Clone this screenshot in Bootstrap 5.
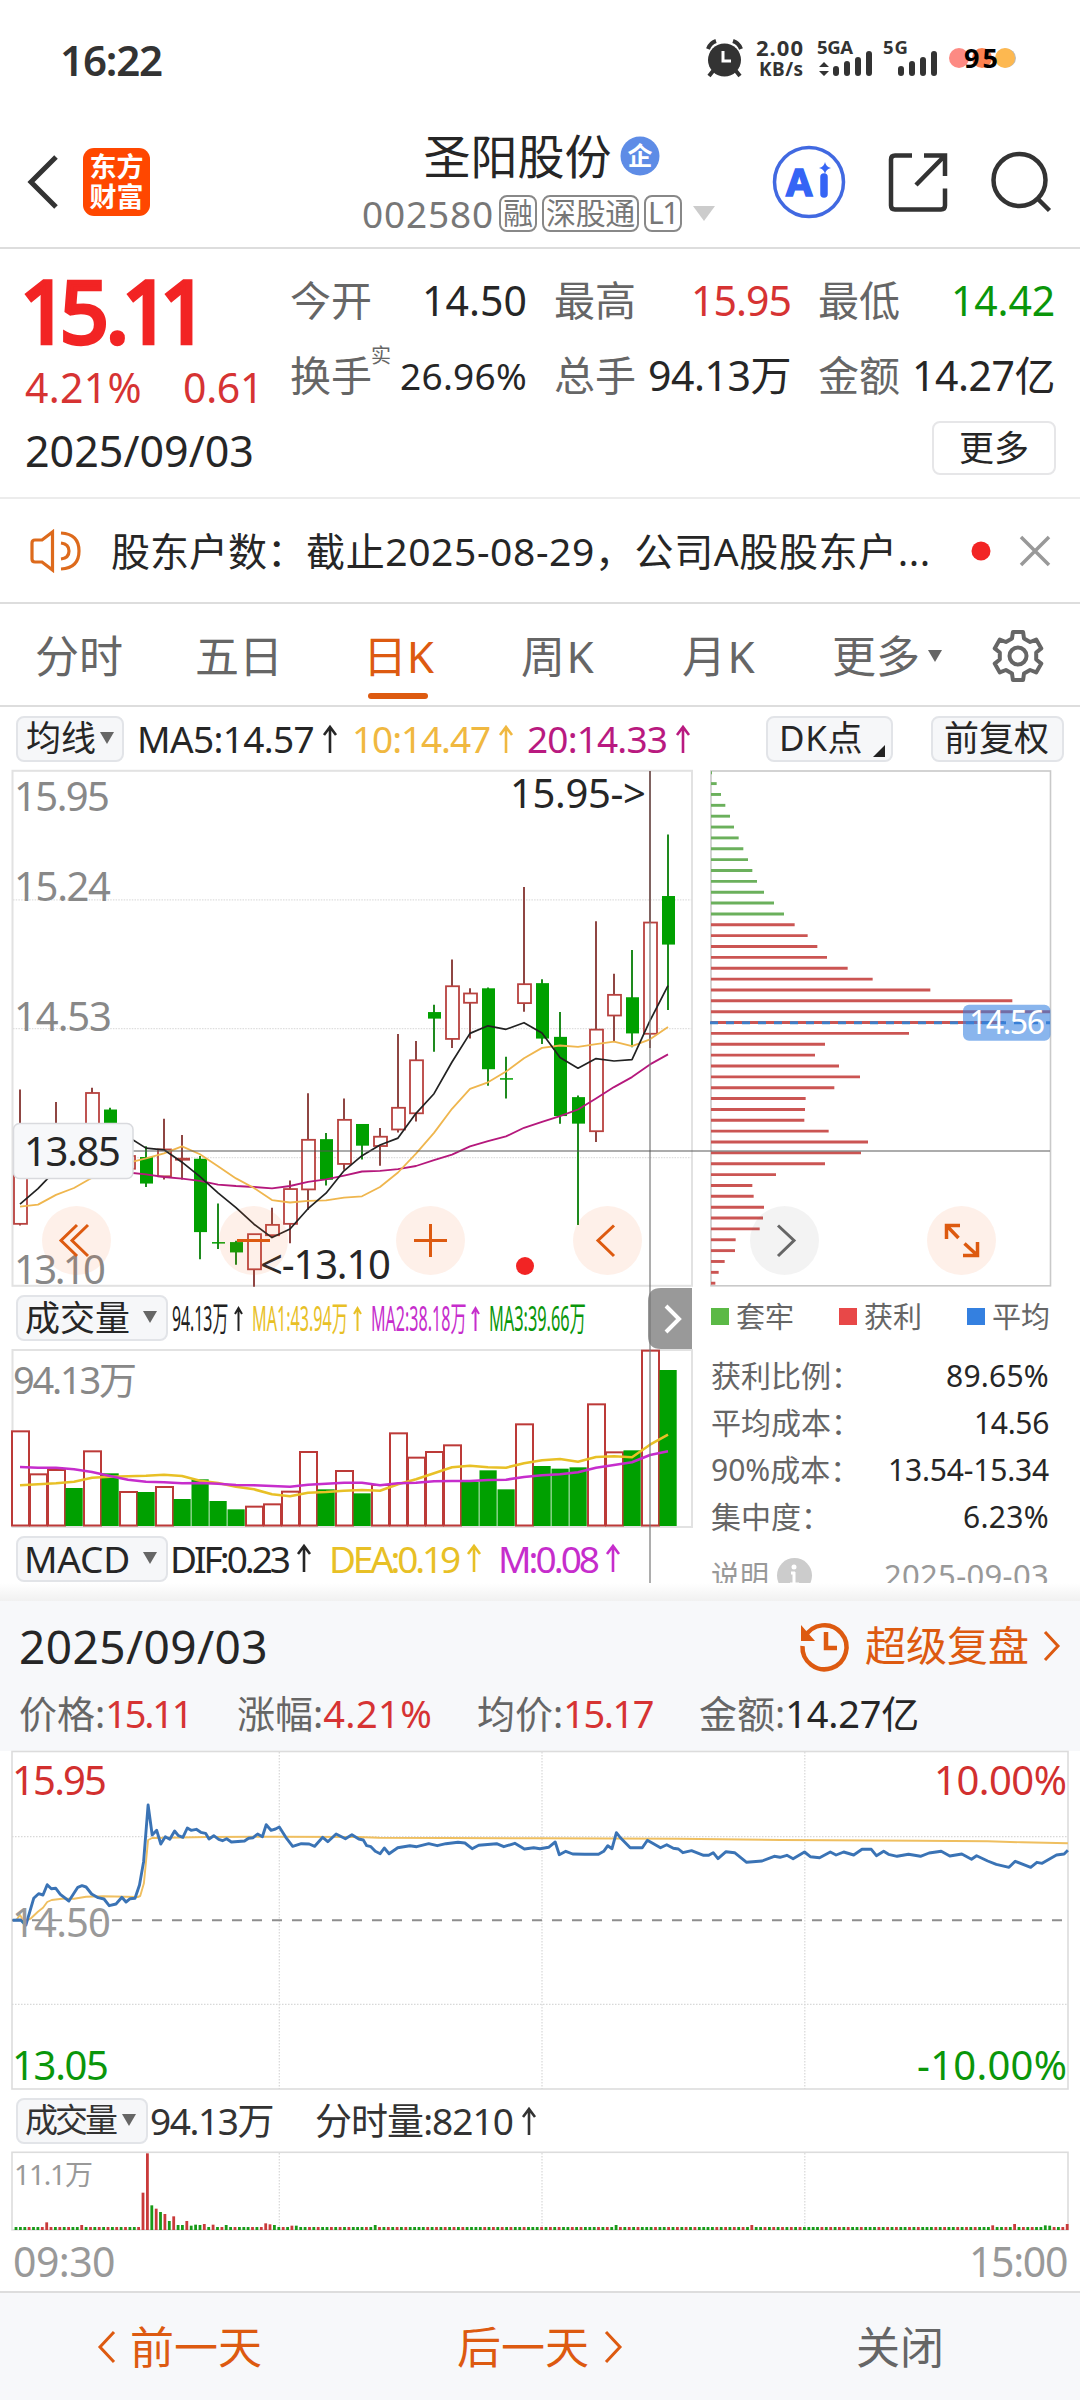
<!DOCTYPE html>
<html lang="zh-CN">
<head>
<meta charset="utf-8">
<meta name="viewport" content="width=device-width, initial-scale=1">
<title>圣阳股份 002580</title>
<link href="https://cdn.jsdelivr.net/npm/bootstrap@5.3.0/dist/css/bootstrap.min.css" rel="stylesheet">
<style>
:root{--ink:#262626;--dim:#666;--up:#f22424;--up2:#d63333;--down:#0a960a;--brand:#dd5a10;--panel:#f7f8fa}
body{width:1080px;height:2400px;overflow:hidden;background:#fff;color:var(--ink);font-family:"Noto Sans","Noto Sans CJK SC",sans-serif;line-height:1;white-space:nowrap}
svg{display:block;overflow:visible;flex:none}
svg text{font-family:"Noto Sans","Noto Sans CJK SC",sans-serif}
[data-fit]{display:inline-block;white-space:pre}
.c-dim{color:var(--dim)}.c-up{color:var(--up2)}.c-down{color:var(--down)}.c-brand{color:var(--brand)}
.c-yel{color:#f0b840}.c-yel2{color:#e8c026}.c-pur{color:#b91a80}.c-mag{color:#c62dcc}.c-gray{color:#999}
.status{height:120px;padding-left:60px;padding-bottom:1px}
.clock{font-size:42px;font-weight:600;color:#333}
.head{height:129px;border-bottom:2px solid #ddd;padding-left:28px;padding-bottom:3px}
.logo{width:67px;height:68px;border-radius:11px;background:#ff4700;color:#fff;font-weight:700;font-size:27px;line-height:30px;margin-left:25px}
.titles{width:362px;margin-left:212px}
.title{font-size:47px;height:48px;padding-right:3px}
.sub{font-size:37px;height:38px;color:#777;gap:5px;margin-top:14px}
.tag{border:2px solid #888;border-radius:8px;height:37px;font-size:30px;padding:0 2px}
.quote{height:250px;border-bottom:2px solid #ececec}
.qleft{width:290px;padding-left:25px}
.price{height:104px}
.qgrid{display:grid;grid-template-columns:repeat(3,237px);column-gap:27px;grid-template-rows:75px 75px;padding-top:14px}
.qgrid>div{display:flex;align-items:center;justify-content:space-between;font-size:41px}
.qgrid sup{font-size:20px;top:-20px;margin-left:-1px;margin-right:auto;position:relative}
.more{width:124px;height:54px;border:2px solid #e6e6e8;border-radius:8px;font-size:35px;margin:8px 0 0 642px;padding-bottom:2px}
.notice{height:105px;border-bottom:2px solid #ddd;padding-left:29px;font-size:39px}
.tabs{height:103px;border-bottom:2px solid #ddd;padding-left:35px;font-size:44px;color:var(--dim)}
.tabs>div{height:100%;display:flex;align-items:center;position:relative;padding-top:2px}
.tabs .on{color:var(--brand)}
.tabs .on::after{content:"";position:absolute;left:5px;bottom:6px;width:60px;height:6px;border-radius:3px;background:var(--brand)}
.tri{width:0;height:0;border:7px solid transparent;border-top:12px solid #666;border-bottom:0}
.pill{background:#f6f7f9;border:2px solid #e2e4e8;border-radius:8px;height:46px;font-size:35px;display:flex;align-items:center;padding-bottom:2px}
.main{height:876px;position:relative;overflow:hidden}
.ind{height:63px;padding-left:16px;font-size:37px}
.fig{display:flex;align-items:center}
.arw{margin-left:9px;stroke:currentColor;fill:none;stroke-width:2.6}
.volrow{height:64px;padding-left:16px}
.macdrow{height:81px;padding:9px 0 0 16px;font-size:37px}
.tools{position:absolute;left:42px;top:499px;width:954px}
.tool{width:69px;height:69px;border-radius:50%;background:rgba(250,110,40,.1)}
.tool.mute{background:rgba(100,100,100,.08)}
.chips{width:380px;padding-left:11px}
.legend{height:61px;width:339px;font-size:29px;color:var(--dim)}
.sq{width:18px;height:17px;margin-right:7px}
.stat{height:47px;width:338px;font-size:30px}
.over{position:absolute;left:0;top:0;pointer-events:none}
.panel{height:168px;background:linear-gradient(#fff,#f1f1f1 18px,var(--panel) 18px)}
.pl{padding:0 19px;font-size:46px;height:125px;margin-bottom:-18px}
.pv{height:61px;font-size:38px;padding:4px 0 0 19px}
.vrow{height:61px;padding-left:16px;font-size:37px;color:#333}
.times{height:61px;padding:2px 13px 0;font-size:41px;color:#999}
.foot{height:109px;border-top:2px solid #ddd;background:var(--panel);font-size:44px;padding-left:97px}
</style>
</head>
<body>
<div class="status d-flex align-items-center">
  <span class="clock" data-fit="102">16:22</span>
  <svg width="330" height="60" viewBox="700 32 330 60" style="margin-left:538px">
    <g fill="#333" stroke="#333">
      <circle cx="724.500" cy="62" r="16.500" stroke="none"/>
      <path d="M708 51q2-6 8-8M741 51q-2-6-8-8M713 73l-4 5M736 73l4 5" fill="none" stroke-width="4"/>
      <path d="M723 53v10h8" fill="none" stroke="#fff" stroke-width="3"/>
    </g>
    <g fill="#333" font-weight="700">
      <text x="756" y="58" font-size="22" textLength="47">2.00</text>
      <text x="759" y="78" font-size="19" textLength="44">KB/s</text>
      <text x="817" y="56" font-size="18.500" textLength="36">5GA</text>
      <text x="883" y="56" font-size="18.500" textLength="25">5G</text>
    </g>
    <g stroke="#333" stroke-width="6" stroke-linecap="round">
      <path d="M836 71v4M847 66v9M858 62v13M869 56v19M901 71v4M912 66v9M923 62v13M934 56v19"/>
    </g>
    <path d="M819 69l5-5 5 5zM819 73l5 5 5-5z" fill="#333"/>
    <ellipse cx="1006" cy="60" rx="10" ry="9.500" fill="#bbb"/>
    <circle cx="959" cy="60" r="10" fill="#fd8a83"/><circle cx="982" cy="60" r="10" fill="#fd8150"/><circle cx="1005" cy="60" r="10" fill="#fdb850"/>
    <text x="964" y="70" font-size="27" font-weight="700" fill="#000" textLength="34">95</text>
  </svg>
</div>

<div class="head d-flex align-items-center">
  <svg width="30" height="54" viewBox="0 0 30 54"><path d="M28 2L3 27l25 25" fill="none" stroke="#333" stroke-width="5"/></svg>
  <div class="logo d-flex flex-column align-items-center justify-content-center"><div>东方</div><div>财富</div></div>
  <div class="titles d-flex flex-column">
    <div class="title d-flex align-items-center justify-content-center"><span>圣阳股份</span>
      <svg class="ms-2" width="40" height="40" viewBox="0 0 40 40"><circle cx="20" cy="20" r="19.500" fill="#5e8ce6"/><text x="20" y="29" font-size="25" font-weight="700" fill="#fff" text-anchor="middle">企</text></svg>
    </div>
    <div class="sub d-flex align-items-center"><span data-fit="132">002580</span><span class="tag d-flex align-items-center">融</span><span class="tag d-flex align-items-center"><span data-fit="89">深股通</span></span><span class="tag d-flex align-items-center"><span data-fit="30">L1</span></span>
      <svg style="margin-left:6px" width="22" height="15"><path d="M0 0h22L11 15z" fill="#ccc"/></svg></div>
  </div>
  <svg width="300" height="74" viewBox="772 144 300 74" style="margin-left:49px">
    <circle cx="808" cy="181" r="34.500" fill="none" stroke="#4169e1" stroke-width="3.500"/>
    <text x="785" y="195" font-size="38" font-weight="700" stroke="#3564f5" stroke-width="1.500" fill="#3564f5" textLength="28">A</text>
    <path d="M823 176v17" stroke="#3564f5" stroke-width="7.500" stroke-linecap="round"/>
    <path d="M824 161q1 5 6 6-5 1-6 6-1-5-6-6 5-1 6-6z" fill="#3564f5"/>
    <g fill="none" stroke="#333" stroke-width="4.500"><path d="M911 154.500h-17q-4 0-4 4v46q0 4 4 4h46q4 0 4-4v-17M923 154.500h21V175M944 154.500L915 184"/>
    <circle cx="1018.500" cy="179" r="26"/><path d="M1036 197l12.500 12.500"/></g>
  </svg>
</div>

<div class="quote d-flex">
  <div class="qleft">
    <svg class="price" width="200" height="104" viewBox="25 249 200 104"><text y="343" x="20 60 106 122 160" font-size="85" fill="#f22424" stroke="#f22424" stroke-width="4.500">15.11</text></svg>
    <div class="c-up d-flex align-items-center" style="height:69px;font-size:41px"><span data-fit="117">4.21%</span><span data-fit="80" style="margin-left:41px">0.61</span></div>
    <div class="d-flex align-items-center" style="height:56px;font-size:43px"><span data-fit="229">2025/09/03</span></div>
  </div>
  <div>
    <div class="qgrid">
      <div><span class="c-dim">今开</span><span data-fit="105">14.50</span></div>
      <div><span class="c-dim">最高</span><span class="c-up" data-fit="100">15.95</span></div>
      <div><span class="c-dim">最低</span><span class="c-down" data-fit="104">14.42</span></div>
      <div><span class="c-dim">换手</span><sup class="c-dim">实</sup><span style="font-size:37px" data-fit="127">26.96%</span></div>
      <div><span class="c-dim">总手</span><span data-fit="143">94.13万</span></div>
      <div><span class="c-dim">金额</span><span data-fit="143">14.27亿</span></div>
    </div>
    <div class="more d-flex align-items-center justify-content-center">更多</div>
  </div>
</div>

<div class="notice d-flex align-items-center">
  <svg width="52" height="44" viewBox="28 528 52 44"><g fill="none" stroke="#dd6a1c" stroke-width="3.200"><path d="M51.500 531L41 539h-7q-3 0-3 3v16q0 3 3 3h7l10.500 8z"/><path d="M60 532q18 1 18 18t-18 18M60 542q8 1 8 8t-8 8"/></g></svg>
  <span class="ms-1" style="padding-left:26px"><span data-fit="195">股东户数：</span><span data-fit="625">截止2025-08-29，公司A股股东户...</span></span>
  <svg style="margin-left:39px" width="82" height="32" viewBox="970 534 82 32"><circle cx="981" cy="550" r="9.500" fill="#f22424"/><path d="M1021 536l28 28M1049 536l-28 28" stroke="#999" stroke-width="3.500"/></svg>
</div>

<div class="tabs d-flex">
  <div style="width:160px">分时</div><div style="width:168px">五日</div><div class="on" style="width:158px"><span data-fit="71">日K</span></div><div style="width:161px"><span data-fit="74">周K</span></div><div style="width:150px"><span data-fit="74">月K</span></div>
  <div style="width:160px">更多<i class="tri ms-2"></i></div>
  <div><svg width="52" height="52" viewBox="-26 -26 52 52"><path id="gear" fill="none" stroke="#666" stroke-width="4" stroke-linejoin="round"/><circle r="8.500" fill="none" stroke="#666" stroke-width="4"/></svg></div>
</div>

<div class="main">
  <div class="ind d-flex align-items-center">
    <div class="pill" style="width:108px;padding-left:8px"><span data-fit="70">均线</span><i class="tri ms-1"></i></div>
    <span class="fig" style="margin-left:13px;width:215px"><span data-fit="177">MA5:14.57</span><svg class="arw" width="14" height="28"><path d="M7 28V2M1 10l6-8 6 8"/></svg></span>
    <span class="fig c-yel" style="width:175px"><span data-fit="138">10:14.47</span><svg class="arw" width="14" height="28"><path d="M7 28V2M1 10l6-8 6 8"/></svg></span>
    <span class="fig c-pur" style="width:239px"><span data-fit="140">20:14.33</span><svg class="arw" width="14" height="28"><path d="M7 28V2M1 10l6-8 6 8"/></svg></span>
    <div class="pill position-relative" style="width:127px;padding-left:11px"><span data-fit="84">DK点</span><svg class="position-absolute" style="right:6px;bottom:3px" width="12" height="12"><path d="M12 0v12H0z" fill="#222"/></svg></div>
    <div class="pill" style="width:133px;margin-left:38px;padding-left:11px">前复权</div>
  </div>
  <div class="d-flex">
    <div style="width:700px">
      <svg id="kline" width="700" height="516" viewBox="0 770 700 516"></svg>
      <div class="volrow d-flex align-items-center">
        <div class="pill" style="width:152px;padding-left:7px">成交量<i class="tri" style="margin-left:13px"></i></div>
        <svg width="440" height="46" viewBox="168 1295 440 46" font-size="34">
          <text transform="translate(172 1331) scale(.465 1)" fill="#222">94.13万</text>
          <text transform="translate(252 1331) scale(.475 1)" fill="#e8c026">MA1:43.94万</text>
          <text transform="translate(371 1331) scale(.473 1)" fill="#c62dcc">MA2:38.18万</text>
          <text transform="translate(489 1331) scale(.48 1)" fill="#0a960a">MA3:39.66万</text>
          <g fill="none" stroke-width="2"><path stroke="#222" d="M238.500 1331v-23m-3.500 6l3.500-6 3.500 6"/><path stroke="#e8c026" d="M357.500 1331v-23m-3.500 6l3.500-6 3.500 6"/><path stroke="#c62dcc" d="M475.500 1331v-23m-3.500 6l3.500-6 3.500 6"/></g>
        </svg>
      </div>
      <svg id="vol" width="700" height="177" viewBox="0 1350 700 177"></svg>
      <div class="macdrow d-flex">
        <div class="pill" style="width:152px;padding-left:6px;font-size:37px"><span data-fit="106">MACD</span><i class="tri" style="margin-left:13px"></i></div>
        <div class="d-flex align-items-center" style="height:44px"><span class="fig" style="width:161px;padding-left:2px"><span data-fit="118">DIF:0.23</span><svg class="arw" width="14" height="28"><path d="M7 28V2M1 10l6-8 6 8"/></svg></span><span class="fig c-yel2" style="width:169px"><span data-fit="129">DEA:0.19</span><svg class="arw" width="14" height="28"><path d="M7 28V2M1 10l6-8 6 8"/></svg></span><span class="fig c-mag"><span data-fit="99">M:0.08</span><svg class="arw" width="14" height="28"><path d="M7 28V2M1 10l6-8 6 8"/></svg></span></div>
      </div>
    </div>
    <div class="chips">
      <svg id="chip" width="341" height="516" viewBox="711 770 341 516"></svg>
      <div class="legend d-flex align-items-center justify-content-between">
        <span class="d-flex align-items-center"><i class="sq" style="background:#5bb946"></i>套牢</span><span class="d-flex align-items-center"><i class="sq" style="background:#e84848"></i>获利</span><span class="d-flex align-items-center"><i class="sq" style="background:#3480e0"></i>平均</span>
      </div>
      <div style="margin-top:5px">
      <div class="stat d-flex align-items-center justify-content-between"><span class="c-dim">获利比例：</span><span data-fit="103">89.65%</span></div>
      <div class="stat d-flex align-items-center justify-content-between"><span class="c-dim">平均成本：</span><span data-fit="75">14.56</span></div>
      <div class="stat d-flex align-items-center justify-content-between"><span class="c-dim">90%成本：</span><span data-fit="161">13.54-15.34</span></div>
      <div class="stat d-flex align-items-center justify-content-between"><span class="c-dim">集中度：</span><span data-fit="86">6.23%</span></div>
      <div class="stat d-flex align-items-center c-gray" style="margin-top:12px;font-size:29px"><span>说明</span><svg class="ms-2" width="35" height="35"><circle cx="17.500" cy="17.500" r="17.500" fill="#ccc"/><path d="M17 14v12M13 26h9M14 15h4" stroke="#fff" stroke-width="3"/><circle cx="17" cy="9" r="2.500" fill="#fff"/></svg><span class="ms-auto" style="font-size:31px" data-fit="165">2025-09-03</span></div>
      </div>
    </div>
  </div>
  <svg class="over" width="1080" height="876" viewBox="0 707 1080 876">
    <path d="M692 1288h-31q-13 0-13 13v35q0 13 13 13h31z" fill="#999"/><path d="M666 1306l13 13-13 13" fill="none" stroke="#fff" stroke-width="4"/>
    <path d="M650 771v812" stroke="#777" stroke-opacity=".6" stroke-width="2"/><path d="M13 1151H1050" stroke="#555" stroke-opacity=".65" stroke-width="1.500"/>
    <rect x="13.500" y="1123.500" width="119.500" height="55" rx="6" fill="#f7f8fa" stroke="#d9dade" stroke-width="1.500"/>
    <text x="24" y="1165.500" font-size="40" textLength="97" fill="#262626">13.85</text>
    <circle cx="525" cy="1266" r="9" fill="#f22424"/>
  </svg>
  <div class="tools d-flex justify-content-between">
    <div class="tool"><svg width="69" height="69" viewBox="0 -1 69 69" fill="none" stroke="#dd5a10" stroke-width="3"><path d="M35 18L19 33.500 35 49M46 18L30 33.500 46 49"/></svg></div>
    <div class="tool"><svg width="69" height="69"><path d="M18 34.500h33" stroke="#dd5a10" stroke-width="3"/></svg></div>
    <div class="tool"><svg width="69" height="69"><path d="M18 34.500h33M34.500 18v33" stroke="#dd5a10" stroke-width="3"/></svg></div>
    <div class="tool"><svg width="69" height="69"><path d="M41 19.500L25 34.500 41 50" fill="none" stroke="#dd5a10" stroke-width="3"/></svg></div>
    <div class="tool mute"><svg width="69" height="69"><path d="M28 19.500l16 15L28 50" fill="none" stroke="#666" stroke-width="3"/></svg></div>
    <div class="tool"><svg width="69" height="69" viewBox="0 -1 69 69"><path d="M33 18.500H19.500V32M20 19L31.500 31M50.500 35v13.500H36M37.500 36.500L50 48" fill="none" stroke="#dd5a10" stroke-width="3.500"/></svg></div>
  </div>
</div>

<div class="panel">
  <div class="pl d-flex align-items-center"><span data-fit="249">2025/09/03</span>
    <span class="c-brand d-flex align-items-center" style="margin-left:532px;font-size:41px">
      <svg width="52" height="52" viewBox="800 1619 52 52"><g fill="none" stroke="#dd5a10" stroke-width="4.500"><path d="M805 1636a22 22 0 1 1-2.500 9"/><path d="M826 1631v16h11"/></g><path d="M801 1624v16h14z" fill="#dd5a10"/></svg>
      <span style="margin-left:13px">超级复盘</span>
      <svg style="margin-left:15px" width="16" height="30"><path d="M1 1l13 14L1 29" fill="none" stroke="#dd5a10" stroke-width="3"/></svg>
    </span></div>
  <div class="pv d-flex"><span style="width:218px"><span class="c-dim">价格:</span><span class="c-up" data-fit="86">15.11</span></span><span style="width:240px"><span class="c-dim">涨幅:</span><span class="c-up" data-fit="109">4.21%</span></span><span style="width:222px"><span class="c-dim">均价:</span><span class="c-up" data-fit="90">15.17</span></span><span><span class="c-dim">金额:</span><span data-fit="134">14.27亿</span></span></div>
</div>
<svg id="day" width="1080" height="339" viewBox="0 1751 1080 339"></svg>
<div class="vrow d-flex align-items-center">
  <div class="pill" style="width:132px;padding-left:7px;font-size:33px"><span data-fit="90">成交量</span><i class="tri" style="margin-left:7px"></i></div>
  <span style="width:165px;margin-left:2px"><span data-fit="123">94.13万</span></span><span data-fit="198">分时量:8210</span><svg class="arw" width="14" height="28"><path d="M7 28V2M1 10l6-8 6 8"/></svg>
</div>
<svg id="dvol" width="1080" height="79" viewBox="0 2151 1080 79"></svg>
<div class="times d-flex align-items-center justify-content-between"><span data-fit="102">09:30</span><span data-fit="98">15:00</span></div>
<div class="foot d-flex align-items-center">
  <span class="c-brand d-flex align-items-center" style="width:360px"><svg width="19" height="32"><path d="M17 1L3 16l14 15" fill="none" stroke="#dd5a10" stroke-width="3"/></svg><span style="margin-left:14px">前一天</span></span>
  <span class="c-brand d-flex align-items-center" style="width:399px"><span>后一天</span><svg style="margin-left:15px" width="19" height="32"><path d="M2 1l14 15L2 31" fill="none" stroke="#dd5a10" stroke-width="3"/></svg></span>
  <span class="c-dim">关闭</span>
</div>

<script src="https://cdn.jsdelivr.net/npm/bootstrap@5.3.0/dist/js/bootstrap.bundle.min.js"></script>
<script>
// Track each figure so that it fills the width of its slot.
document.querySelectorAll('[data-fit]').forEach(e=>{
  const w=e.getBoundingClientRect().width,n=[...e.textContent].length;
  e.style.letterSpacing=((+e.dataset.fit-w)/n).toFixed(2)+'px';
});
const line=(x1,y1,x2,y2,c,w,x='')=>`<path d="M${x1} ${y1}L${x2} ${y2}" stroke="${c}" stroke-width="${w}" fill="none" ${x}/>`;
const rect=(x,y,w,h,x2)=>`<rect x="${x}" y="${y}" width="${w}" height="${h}" ${x2}/>`;
const poly=(p,c,w)=>`<polyline points="${p.map(q=>q[0].toFixed(1)+','+q[1].toFixed(1)).join(' ')}" fill="none" stroke="${c}" stroke-width="${w}" stroke-linejoin="round"/>`;
const label=(x,y,t,w,c,s=40)=>`<text x="${x}" y="${y}" font-size="${s}" fill="${c}" textLength="${w}">${t}</text>`;
const put=(id,s)=>document.getElementById(id).innerHTML=s;
const S=2.904,X=i=>20+18*i, K=v=>760+v/S, V=v=>1280+v/3;
const RED='#b8423f',GRN='#00a000';

// Daily candles: direction, high, open/close edges, low.
const candles=[['r',957,1190,1347,1352],['r',1100,1120,1190,1200],['r',993,1080,1150,1180],['g',1080,1090,1150,1180],['r',952,967,1130,1150],['g',1010,1015,1130,1180],['r',1140,1150,1187,1190],['g',1122,1153,1230,1240],['r',1042,1131,1209,1218],['r',1089,1159,1159,1218],['g',1150,1158,1371,1450],['g',1288,1402,1402,1420],['g',1396,1400,1430,1466],['r',1377,1377,1479,1530],['r',1300,1350,1380,1385],['r',1221,1246,1347,1403],['r',968,1103,1247,1307],['g',1083,1101,1219,1236],['r',983,1045,1173,1190],['g',1057,1057,1120,1160],['r',1069,1094,1121,1178],['r',796,1010,1073,1082],['r',816,872,1026,1050],['g',711,732,751,847],['r',579,657,810,836],['r',663,678,705,809],['g',661,663,898,946],['g',862,926,926,983],['r',369,651,706,731],['g',637,648,809,825],['g',732,804,1034,1056],['g',974,979,1056,1350],['r',468,783,1078,1109],['r',621,682,742,816],['g',552,689,794,834],['r',32,472,795,836],['g',216,395,536,726]];
const ma5=[1290,1245,1190,1150,1120,1090,1094,1127,1132,1168,1210,1257,1300,1348,1387,1362,1303,1258,1193,1149,1118,1098,1026,969,877,794,772,782,763,793,864,895,867,874,870,757,655];
const ma10=[1297,1291,1263,1243,1213,1190,1170,1157,1142,1122,1145,1180,1215,1243,1278,1285,1280,1279,1271,1267,1240,1198,1143,1083,1013,955,936,905,866,836,829,833,825,818,831,811,775];
const ma20=[1198,1203,1211,1216,1222,1233,1237,1240,1244,1237,1225,1218,1207,1195,1193,1188,1179,1162,1146,1122,1107,1093,1068,1051,1034,1015,983,950,921,884,855];
let s=rect(12.5,770.8,679.5,515,'fill="none" stroke="#e2e2e2" stroke-width="2"');
[899.8,1028.6,1157.7].forEach(y=>s+=line(13,y,692,y,'#dedede',1.3,'stroke-dasharray="1.5 1.2"'));
s+=label(14,810.5,'15.95',96,'#888')+label(14,901,'15.24',97,'#888')+label(14,1030.5,'14.53',98,'#888')+label(14,1283.5,'13.10',92,'#888');
candles.forEach((c,i)=>{const x=X(i),[d,h,a,b,l]=c;
  if(d=='g'){s+=line(x,K(h),x,K(l),'#1e8a1e',2);s+=rect(x-6,K(a)-(a==b?.7:0),13,Math.max(1.5,(b-a)/S),`fill="${GRN}"`);}
  else{s+=line(x,K(h),x,K(a),'#8f4643',2)+line(x,K(b),x,K(l),'#8f4643',2);
    s+=a==b?rect(x-7,K(a)-1.3,15,2.8,`fill="${RED}"`):rect(x-6,K(a),13,(b-a)/S,`fill="${i==13||i==14?'none':'#fff'}" stroke="${RED}" stroke-width="1.8"`);}});
s+=poly(ma20.map((v,i)=>[X(i+6),K(v)]),'#b5187c',1.8)+poly(ma10.map((v,i)=>[X(i),K(v)]),'#efb64e',1.8)+poly(ma5.map((v,i)=>[X(i),K(v)]),'#222',1.7);
s+=label(260,1278.5,'&lt;-13.10',131,'#262626')+label(510,808,'15.95-&gt;',136,'#262626');
put('kline',s);

const vols='r454 r583 r570 g624 r514 g580 r636 g636 r621 g657 g598 g663 g688 r680 r673 r635 r516 g628 r573 g640 r615 r460 r533 r516 r496 g605 g571 g628 r433 g558 g566 g562 r373 r517 g511 r212 g270'.split(' ');
const vy=[616,613,610,605,593,590,589,587,584,588,602,609,620,628,643,649,638,636,632,630,632,613,598,580,562,557,562,563,550,541,537,545,531,529,532,494,464];
const vm=[561,563,563,568,576,588,599,605,607,610,609,611,615,616,618,620,614,611,608,608,616,610,608,604,603,603,600,599,591,586,583,577,563,555,547,525,514];
s=rect(12.5,1350,679.5,177,'fill="none" stroke="#e2e2e2" stroke-width="2"')+label(13,1394,'94.13万',124,'#888',38);
vols.forEach((q,i)=>{const y=V(+q.slice(1)),x=X(i);s+=q[0]=='g'?rect(x-8.5,y,17.2,1526-y,`fill="${GRN}"`):rect(x-8,y,17,1525.5-y,'fill="#fff" stroke="#bc3a38" stroke-width="2"')});
s+=poly(vy.map((v,i)=>[X(i),V(v)]),'#e8c026',2.6)+poly(vm.map((v,i)=>[X(i),V(v)]),'#c62dcc',2.6);
put('vol',s);

// Cost distribution, top price first.
const cost=[66,80,93,106,120,132,146,160,174,187,201,222,252,282,314,353,382,411,473,548,721,967,1080,942,657,405,375,447,510,433,347,345,343,416,534,513,405,258,187,191,222,219,209,137,135,104,86,76];
s=rect(711,771,339.5,514.8,'fill="none" stroke="#c9c9c9" stroke-width="1.6"');
cost.forEach((v,i)=>{const y=K(37+31.54*i);s+=line(711,y,690+v/3,y,i<14?'#6bb05c':'#cb5553',2.9)});
s+=line(710,1022.7,1050,1022.7,'#3f7fc8',2.9,'stroke-dasharray="8 8"');
s+=rect(963,1004.8,87.5,36,'rx="6" fill="#3480e0" fill-opacity=".58"')+label(969,1034,'14.56',76,'#fff',32);
put('chip',s);

const P=(t,o=0)=>t.trim().split(' ').map(q=>q.split(',')).map(q=>[o+q[0]/2.904,1740+q[1]/3]);
const px=[...P('37,541 60,540 75,556 98,475 112,461 125,465 137,434 149,446 162,445 175,463 200,483 226,442 238,437 250,441 266,462 285,473 302,477 317,497 337,492 354,472 366,486 378,476 392,475 405,435 417,365 430,195 442,285 455,271 467,312 480,290 493,298 507,273 518,287 531,292 544,264 555,271 570,268 583,277 597,280 607,297 621,287 635,298 646,302 658,296 672,306 710,303 722,295 735,293 748,282 762,290 773,254 787,271 800,267 811,261 830,292 850,319 875,311 898,312 914,319 937,292 952,305 976,282 1003,296 1022,284 1042,297 1055,300 1065,317 1077,320 1090,334 1104,341 1116,324 1130,341 1155,323 1190,317 1210,320 1245,311 1270,317 1295,311 1330,307 1350,309 1371,326 1390,316 1442,311 1463,320 1495,310 1523,327 1550,323'),
...P('0,326 25,322 44,306 56,344 75,334 95,342 130,343 170,343 185,334 197,317 209,326 222,278 235,295 262,323 297,323 312,301 350,323 368,314 387,325 402,327 415,338 440,332 475,346 490,346 503,338 517,356 540,335 565,338 600,367 645,363 680,349 697,352 717,346 735,356 768,336 785,350 812,353 843,336 860,345 882,336 911,345 935,328 962,328 977,347 998,334 1012,343 1037,349 1070,343 1105,349 1130,339 1165,334 1190,348 1225,342 1253,358 1268,347 1300,363 1325,373 1362,382 1380,364 1425,382 1443,367 1458,370 1500,345 1522,342 1533,331',540)];
const avg=[...P('47,541 58,525 70,545 90,535 110,515 125,503 137,486 150,480 180,476 215,476 250,470 300,469 400,471 407,468 418,430 430,300 442,294 600,291 800,290 1040,291 1100,293 1568,295'),...P('400,296 700,300 1100,302 1300,304 1400,307 1533,310',540)];
s=rect(12,1751.5,1056,337.5,'fill="none" stroke="#dcdcdc" stroke-width="1.6"');
[1836.7,2004.3].forEach(y=>s+=line(12,y,1068,y,'#d8d8d8',1.2,'stroke-dasharray="1.5 1.5"'));
[279.3,542,804.8].forEach(x=>s+=line(x,1752,x,2089,'#d8d8d8',1.2,'stroke-dasharray="1.5 1.5"'));
s+=line(12,1920.3,1066,1920.3,'#8e8e8e',2,'stroke-dasharray="10 10"');
s+=poly(avg,'#efbf60',1.9)+poly(px,'#3a73b5',2.9);
s+=label(12,1794.5,'15.95',95,'#d2302f')+label(12,1936.5,'14.50',99,'#999')+label(12,2079.5,'13.05',97,'#0a960a')+label(934,1794.5,'10.00%',133,'#d2302f')+label(917,2079.5,'-10.00%',150,'#0a960a');
put('day',s);

const peak={7:397,29:308,30:190,31:346,32:356,33:366,34:372,35:393,36:379,37:405,38:405,39:393,40:407,41:404,42:405,43:402,45:404,48:405,57:400,58:403,59:405,82:405,137:405,168:405,15:405,63:407,64:407,223:406,228:402,235:406,236:407,240:402};
s=rect(12,2152.3,1056,77.5,'fill="none" stroke="#dcdcdc" stroke-width="1.6"')+label(14,2184.5,'11.1万',79,'#999',28);
[279.3,542,804.8].forEach(x=>s+=line(x,2153,x,2229,'#d8d8d8',1.2,'stroke-dasharray="1.5 1.5"'));
const gset=new Set([31,33,35,37,38,40,41,82,137]),rset=new Set([7,15,29,30,32,34,36,39,43,57,168,228,240]);
for(let i=0;i<=240;i++){const y=2090+(peak[i]||411)/3,x=16+4.38*i;
  const g=gset.has(i)||(!rset.has(i)&&((i*i*7+i*3)%11<4||i%13<2));
  s+=rect((x-1.4).toFixed(1),y,2.8,2230-y,`fill="${g?'#189a18':'#c93a3a'}"`)}
put('dvol',s);

// Settings gear: six flat teeth joined by shallow notches.
let g='';for(let i=0;i<6;i++){const a=-90+60*i,p=(r,d)=>[(r*Math.cos((a+d)*Math.PI/180)).toFixed(1),(r*Math.sin((a+d)*Math.PI/180)).toFixed(1)].join(' ');
  g+=(i?'L':'M')+p(24.5,-12)+'L'+p(24.5,12)+'L'+p(18.5,19)+'L'+p(18.5,41)}
document.getElementById('gear').setAttribute('d',g+'Z');
</script>
</body>
</html>
